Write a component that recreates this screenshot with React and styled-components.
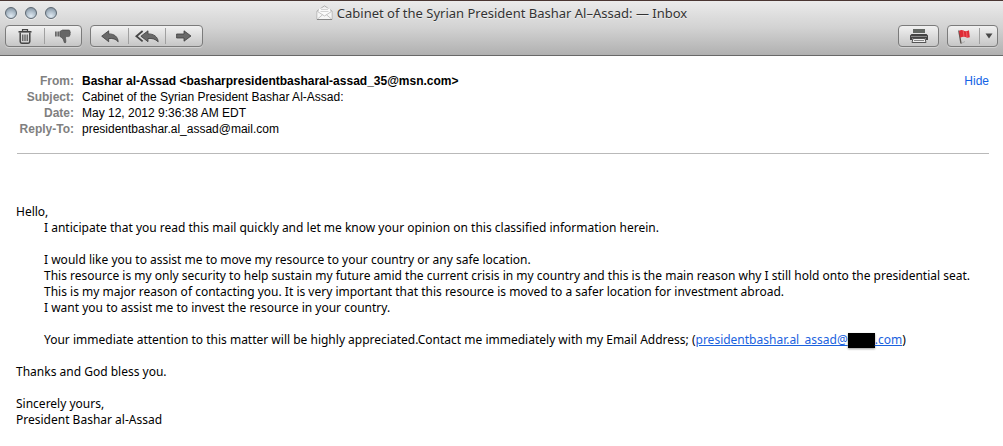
import React from 'react';
import styled, { createGlobalStyle } from 'styled-components';

const GlobalStyle = createGlobalStyle`
  * {
    box-sizing: border-box;
  }

  body {
    margin: 0;
    background: #fff;
    color: #000;
    font-family: 'Noto Sans', 'DejaVu Sans', sans-serif;
  }
`;

const Window = styled.main`
  min-height: 100vh;
  background: #fff;
`;

const Chrome = styled.header`
  height: 56px;
  padding: 0 5px;
  background: linear-gradient(#ebebeb, #d2d2d2 50%, #b0b0b0);
  border-top: 1px solid #4a3632;
  border-bottom: 1px solid #686868;
`;

const TitleBar = styled.div`
  display: grid;
  grid-template-columns: 1fr auto 1fr;
  align-items: center;
  height: 24px;
`;

const Lights = styled.div`
  display: flex;
  gap: 8px;
`;

const Light = styled.button`
  width: 12px;
  height: 12px;
  padding: 0;
  border: 1px solid #5d6872;
  border-radius: 50%;
  background: radial-gradient(circle at 50% 80%, #dfe9f1, #b3c1cd 45%, #8796a4 85%);
  box-shadow: 0 1px 0 rgba(255, 255, 255, 0.5);
`;

const Title = styled.h1`
  display: flex;
  align-items: center;
  gap: 4px;
  margin: 0;
  color: #333;
  font-size: 13px;
  font-weight: 400;
  line-height: 16px;
  text-shadow: 0 1px 0 rgba(255, 255, 255, 0.5);
  white-space: nowrap;
`;

const Toolbar = styled.div`
  display: flex;
  gap: 8px;
`;

const Spacer = styled.div`
  flex: 1;
`;

const Group = styled.div`
  display: flex;
  align-items: center;
  height: 22px;
  border: 1px solid #7b7b7b;
  border-radius: 4px;
  background: linear-gradient(#f1f1f1, #c6c6c6);
  box-shadow: 0 1px 0 rgba(255, 255, 255, 0.35);
`;

const ToolButton = styled.button`
  display: flex;
  align-items: center;
  justify-content: center;
  width: ${props => props.$width || 37}px;
  height: 16px;
  padding: 0;
  border: 0;
  background: none;
  color: #505050;

  & + & {
    border-left: 1px solid #a0a0a0;
  }
`;

const MessageHead = styled.section`
  display: flex;
  justify-content: space-between;
  align-items: flex-start;
  margin: 0 14px 0 17px;
  padding: 17px 0 16px;
  border-bottom: 1px solid #b9b9b9;
  font: 12px/16px 'Liberation Sans', Arial, sans-serif;
`;

const Fields = styled.dl`
  display: grid;
  grid-template-columns: 57px auto;
  column-gap: 8px;
  margin: 0;
`;

const Label = styled.dt`
  color: #808080;
  font-weight: 700;
  text-align: right;
  white-space: nowrap;
`;

const Value = styled.dd`
  margin: 0;
  font-weight: ${props => (props.$strong ? 700 : 400)};
`;

const HideLink = styled.a`
  color: #1463e6;
  text-decoration: none;
`;

const Body = styled.article`
  padding: 50px 14px 16px 16px;
  font-size: 12px;
  line-height: 16px;
`;

const Paragraph = styled.p`
  margin: 0 0 ${props => (props.$tight ? 0 : 16)}px;
  padding-left: ${props => (props.$indent ? 28 : 0)}px;
`;

const MailLink = styled.a`
  color: #1a62de;
`;

const Redacted = styled.span`
  display: inline-block;
  width: 27px;
  height: 15px;
  background: #000;
  box-shadow: 0 1px 2px rgba(0, 0, 0, 0.4);
  vertical-align: -4px;
`;

const EnvelopeIcon = () => (
  <svg width="17" height="16" viewBox="0 0 17 16" aria-hidden="true">
    <path d="M1 6 8.5 .8 16 6V14.5H1Z" fill="#ececec" stroke="#b0b0b0" />
    <path d="M3 8V3.5H14V8L8.5 11Z" fill="#fafafa" />
    <path d="M5 4.5H12M4.5 6.5H12.5" stroke="#d3d3d3" />
    <path d="M1.5 6.5 8.5 11 15.5 6.5V14H1.5Z" fill="#f6f6f6" />
    <path d="M1.5 6.5 8.5 11 15.5 6.5M1.5 14 6.5 9.8M15.5 14 10.5 9.8" fill="none" stroke="#b8b8b8" strokeWidth=".8" />
    <path d="M1 14.5H16" stroke="#858585" />
  </svg>
);

const TrashIcon = () => (
  <svg width="14" height="15" viewBox="0 0 14 15" fill="none" stroke="#454545" aria-hidden="true">
    <path d="M.5 2.8H13.5" strokeWidth="1.6" />
    <path d="M4.5 2V.7H9.5V2" strokeWidth="1.2" />
    <path d="M2.2 3.5V12.5Q2.2 14.2 3.8 14.2H10.2Q11.8 14.2 11.8 12.5V3.5" strokeWidth="1.5" />
    <path d="M4.8 5.5V12M7 5.5V12M9.2 5.5V12" strokeWidth="1.1" />
  </svg>
);

const ThumbDownIcon = () => (
  <svg width="16" height="15" viewBox="0 0 16 15" aria-hidden="true">
    <path d="M.2 2.5H1.6V7.5H.2ZM2.5 2.5H3.8V7.5H2.5Z" fill="#4a4a4a" />
    <path
      d="M4.8 2.5 7.5 1H13.8Q15.2 1.1 15 2.5 15.8 3.3 15.1 4.3 15.7 5.3 14.8 6 15 7.5 13.6 7.6H10.6Q10.3 9 10.8 11 11.2 13.6 10.2 14 9 14 8.8 12 8.4 9.8 6.7 8.7 5.6 7.9 4.8 7.4Z"
      fill="#666"
      stroke="#444"
      strokeWidth=".6"
    />
  </svg>
);

const ReplyIcon = () => (
  <svg width="18" height="13" viewBox="0 0 18 13" aria-hidden="true">
    <path d="M.7 6.2 7.7.8V3.9C13.2 3.8 16.8 6.6 17.2 11.8 14.6 8.8 12 8.3 7.7 8.5V11.7Z" fill="#696969" stroke="#3e3e3e" strokeWidth=".8" />
  </svg>
);

const ReplyAllIcon = () => (
  <svg width="24" height="13" viewBox="0 0 24 13" aria-hidden="true">
    <path d="M7.6 1 1.4 6.2 7.6 11.4" fill="none" stroke="#454545" strokeWidth="1.8" />
    <path d="M5.9 6.2 13 .8V3.9C18.6 3.8 22.8 6.6 23.2 11.8 20 8.8 17.4 8.3 13 8.5V11.7Z" fill="#696969" stroke="#3e3e3e" strokeWidth=".8" />
  </svg>
);

const ForwardIcon = () => (
  <svg width="16" height="12" viewBox="0 0 16 12" aria-hidden="true">
    <path d="M.6 4H8V.8L15 6 8 11.2V8H.6Z" fill="#696969" stroke="#3e3e3e" strokeWidth=".8" />
  </svg>
);

const PrintIcon = () => (
  <svg width="18" height="15" viewBox="0 0 18 15" aria-hidden="true">
    <path d="M3 0H15V4H3Z" fill="#626662" />
    <path d="M1.5 5H16.5L18 6.5V11H15.5V9H2.5V11H0V6.5Z" fill="#444" />
    <path d="M1.5 7.5H16.5" stroke="#d0d0d0" strokeDasharray="1 1" />
    <path d="M3 9.5H15L16 13.5H2Z" fill="#efefef" stroke="#555" />
    <path d="M4 11.5H14" stroke="#888" />
  </svg>
);

const FlagIcon = () => (
  <svg width="14" height="15" viewBox="0 0 14 15" aria-hidden="true">
    <path d="M4 14.5 8 12.5" stroke="#999" opacity=".6" />
    <path d="M1.8 1.5 4 14.5" stroke="#5a5550" strokeWidth="1.4" />
    <path d="M2 2Q4.5.2 6.5 1.6T12 1.3L12.8 8.2Q10.6 9.2 8.4 8.1T3.2 8.8Z" fill="#df2b36" />
    <path d="M6.3 2.2 7 7.8M9.5 2.6 10 8" stroke="#f06c72" strokeWidth=".8" />
  </svg>
);

const CaretIcon = () => (
  <svg width="8" height="6" viewBox="0 0 8 6" aria-hidden="true">
    <path d="M.5.5H7.5L4 5.5Z" fill="#484848" />
  </svg>
);

export default function App() {
  return (
    <>
      <GlobalStyle />
      <Window>
        <Chrome>
          <TitleBar>
            <Lights>
              <Light aria-label="Close" />
              <Light aria-label="Minimize" />
              <Light aria-label="Zoom" />
            </Lights>
            <Title>
              <EnvelopeIcon />
              Cabinet of the Syrian President Bashar Al–Assad: — Inbox
            </Title>
          </TitleBar>
          <Toolbar>
            <Group>
              <ToolButton $width={38} aria-label="Delete"><TrashIcon /></ToolButton>
              <ToolButton aria-label="Junk"><ThumbDownIcon /></ToolButton>
            </Group>
            <Group>
              <ToolButton aria-label="Reply"><ReplyIcon /></ToolButton>
              <ToolButton aria-label="Reply all"><ReplyAllIcon /></ToolButton>
              <ToolButton aria-label="Forward"><ForwardIcon /></ToolButton>
            </Group>
            <Spacer />
            <Group>
              <ToolButton $width={39} aria-label="Print"><PrintIcon /></ToolButton>
            </Group>
            <Group>
              <ToolButton $width={31} aria-label="Flag"><FlagIcon /></ToolButton>
              <ToolButton $width={18} aria-label="Flag colors"><CaretIcon /></ToolButton>
            </Group>
          </Toolbar>
        </Chrome>
        <MessageHead>
          <Fields>
            <Label>From:</Label>
            <Value $strong>Bashar al-Assad &lt;basharpresidentbasharal-assad_35@msn.com&gt;</Value>
            <Label>Subject:</Label>
            <Value>Cabinet of the Syrian President Bashar Al-Assad:</Value>
            <Label>Date:</Label>
            <Value>May 12, 2012 9:36:38 AM EDT</Value>
            <Label>Reply-To:</Label>
            <Value>presidentbashar.al_assad@mail.com</Value>
          </Fields>
          <HideLink href="#hide">Hide</HideLink>
        </MessageHead>
        <Body>
          <Paragraph $tight>Hello,</Paragraph>
          <Paragraph $indent>
            I anticipate that you read this mail quickly and let me know your opinion on this classified information herein.
          </Paragraph>
          <Paragraph $indent>
            I would like you to assist me to move my resource to your country or any safe location.
            <br />
            This resource is my only security to help sustain my future amid the current crisis in my country and this is the main reason why I still hold onto the presidential seat.
            <br />
            This is my major reason of contacting you. It is very important that this resource is moved to a safer location for investment abroad.
            <br />
            I want you to assist me to invest the resource in your country.
          </Paragraph>
          <Paragraph $indent>
            Your immediate attention to this matter will be highly appreciated.Contact me immediately with my Email Address; (
            <MailLink href="#mail">presidentbashar.al_assad@<Redacted />.com</MailLink>)
          </Paragraph>
          <Paragraph>Thanks and God bless you.</Paragraph>
          <Paragraph>
            Sincerely yours,
            <br />
            President Bashar al-Assad
          </Paragraph>
        </Body>
      </Window>
    </>
  );
}
